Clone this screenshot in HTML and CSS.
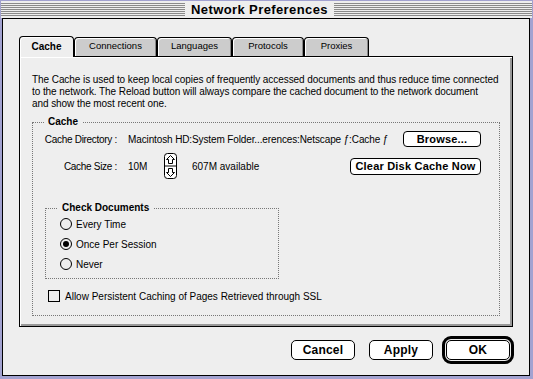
FILE: index.html
```html
<!DOCTYPE html>
<html lang="en">
<head>
    <meta charset="UTF-8">
    <title>Network Preferences</title>
    <link rel="stylesheet" href="styles.css">
</head>
<body>

    <div class="window">
        <div class="titlebar">
            <span class="stripes left"></span>
            <span class="title">Network Preferences</span>
            <span class="stripes"></span>
        </div>

        <div class="frame">
            <div class="tabs">
                <div class="tab active">Cache</div>
                <div class="tab">Connections</div>
                <div class="tab">Languages</div>
                <div class="tab">Protocols</div>
                <div class="tab">Proxies</div>
            </div>

            <div class="panel">
                <p class="intro">
                    The Cache is used to keep local copies of frequently accessed documents and thus reduce time connected<br>
                    to the network. The Reload button will always compare the cached document to the network document<br>
                    and show the most recent one.
                </p>

                <fieldset class="group cache-group">
                    <legend>Cache</legend>

                    <div class="row dir-row">
                        <span class="label">Cache Directory :</span>
                        <span class="value path">Macintosh HD:System Folder...erences:Netscape ƒ:Cache ƒ</span>
                        <button class="btn browse">Browse...</button>
                    </div>

                    <div class="row size-row">
                        <span class="label">Cache Size :</span>
                        <span class="value size">10M</span>
                        <svg class="stepper" width="13" height="26" viewBox="0 0 13 26">
                            <rect x="0.5" y="0.5" width="12" height="25" rx="3" fill="#fff" stroke="#000"/>
                            <line x1="1" y1="13" x2="12" y2="13" stroke="#000"/>
                            <path d="M6.5 2.5 L10.5 6.5 L8.5 6.5 L8.5 10.5 L4.5 10.5 L4.5 6.5 L2.5 6.5 Z" fill="none" stroke="#000"/>
                            <path d="M6.5 23.5 L10.5 19.5 L8.5 19.5 L8.5 15.5 L4.5 15.5 L4.5 19.5 L2.5 19.5 Z" fill="none" stroke="#000"/>
                        </svg>
                        <span class="available">607M available</span>
                        <button class="btn clear">Clear Disk Cache Now</button>
                    </div>

                    <fieldset class="group check-group">
                        <legend>Check Documents</legend>
                        <div class="radio"><span class="dot"></span>Every Time</div>
                        <div class="radio on"><span class="dot"></span>Once Per Session</div>
                        <div class="radio"><span class="dot"></span>Never</div>
                    </fieldset>

                    <div class="check"><span class="box"></span>Allow Persistent Caching of Pages Retrieved through SSL</div>
                </fieldset>
            </div>

            <div class="actions">
                <button class="btn action">Cancel</button>
                <button class="btn action">Apply</button>
                <div class="default-ring">
                    <button class="btn action">OK</button>
                </div>
            </div>
        </div>
    </div>

</body>
</html>
```

FILE: styles.css
```css
body {
    margin: 0;
    background-color: #a2a2d0;
    font-family: "Liberation Sans", Arial, sans-serif;
    font-size: 10px;
    color: #000;
}

.window {
    width: 533px;
    height: 379px;
    display: flex;
    flex-direction: column;
}

/* title bar */

.titlebar {
    height: 17px;
    margin: 1px 1px 0;
    background: #eeeeee;
    display: flex;
    align-items: flex-start;
}

.stripes {
    flex: 1;
    height: 13px;
    margin-top: 2px;
    background: repeating-linear-gradient(to bottom, #8a8a8a 0 1px, #eeeeee 1px 2px);
}

.stripes.left {
    flex: 0 0 184px;
}

.title {
    padding: 0 6px;
    font-size: 13px;
    font-weight: bold;
    letter-spacing: 0.4px;
    line-height: 17px;
    white-space: nowrap;
}

/* window body */

.frame {
    flex: 1;
    margin: 0 3px 3px 2px;
    border: 1px solid #000;
    background: #eeeeee;
}

.tabs {
    display: flex;
    align-items: flex-end;
    margin: 17px 16px 0;
}

.tab {
    box-sizing: border-box;
    height: 19px;
    text-align: center;
    font-size: 9.5px;
    line-height: 16px;
    background: #cccccc;
    border: 1px solid #000;
    border-bottom: none;
    border-radius: 4px 4px 0 0;
    box-shadow: inset 1px 1px #fff, inset -1px 0 #888;
}

.tab:nth-child(1) { width: 55px; }
.tab:nth-child(2) { width: 83px; }
.tab:nth-child(3) { width: 75px; }
.tab:nth-child(4) { width: 72px; }
.tab:nth-child(5) { width: 65px; }

.tab.active {
    height: 21px;
    margin-bottom: -1px;
    font-size: 10px;
    line-height: 19px;
    font-weight: bold;
    background: #eeeeee;
    position: relative;
    z-index: 1;
    box-shadow: inset 1px 1px #fff;
}

.panel {
    margin: 0 16px;
    padding: 17px 12px 10px;
    border: 1px solid #000;
    box-shadow: inset 1px 1px #fff, inset -2px -2px #999;
}

.intro {
    margin: 0;
    line-height: 12px;
    white-space: nowrap;
    letter-spacing: -0.07px;
}

/* group boxes */

.group {
    margin: 0;
    padding: 0;
    min-inline-size: 0;
    border: 1px dotted #777;
}

.group legend {
    padding: 0 4px;
    font-weight: bold;
    line-height: 12px;
}

.cache-group {
    margin-top: 6px;
    padding: 3px 18px 12px 8px;
}

.cache-group > legend {
    margin-left: 3px;
}

.row {
    display: flex;
    align-items: center;
    white-space: nowrap;
}

.label {
    flex: 0 0 76px;
    min-width: 0;
    text-align: right;
    margin-right: 11px;
    letter-spacing: -0.3px;
}

.value {
    flex: none;
}

.path {
    letter-spacing: -0.12px;
}

.dir-row {
    height: 16px;
}

.size-row {
    height: 26px;
    margin-top: 6px;
}

.size {
    width: 36px;
}

.available {
    margin-left: 15px;
}

.btn {
    font-family: "Liberation Sans", Arial, sans-serif;
    font-weight: bold;
    font-size: 11px;
    letter-spacing: 0.2px;
    background: #fff;
    border: 1px solid #000;
    border-radius: 4px;
    padding: 0;
    color: #000;
}

.browse {
    margin-left: auto;
    width: 78px;
    height: 16px;
}

.clear {
    margin-left: auto;
    width: 131px;
    height: 17px;
}

.check-group {
    width: 234px;
    box-sizing: border-box;
    margin: 23px 0 0 4px;
    padding: 0 0 4px 14px;
}

.check-group > legend {
    margin-left: -2px;
}

.radio {
    height: 20px;
    display: flex;
    align-items: center;
}

.dot {
    width: 10px;
    height: 10px;
    margin-right: 4px;
    border: 1px solid #000;
    border-radius: 50%;
    background: #eeeeee;
    display: flex;
    align-items: center;
    justify-content: center;
}

.radio.on .dot::after {
    content: "";
    width: 6px;
    height: 6px;
    border-radius: 50%;
    background: #000;
}

.check {
    display: flex;
    align-items: center;
    height: 14px;
    margin: 10px 0 0 7px;
}

.box {
    width: 10px;
    height: 10px;
    margin-right: 5px;
    border: 1px solid #000;
    background: #eeeeee;
}

/* dialog buttons */

.actions {
    display: flex;
    justify-content: flex-end;
    align-items: center;
    margin: 9px 15px 0 0;
}

.action {
    width: 64px;
    height: 20px;
    font-size: 12px;
    border-radius: 5px;
    margin-left: 14px;
}

.default-ring {
    margin-left: 9px;
    padding: 1px;
    border: 3px solid #000;
    border-radius: 9px;
    display: flex;
}

.default-ring .action {
    margin-left: 0;
}
```
